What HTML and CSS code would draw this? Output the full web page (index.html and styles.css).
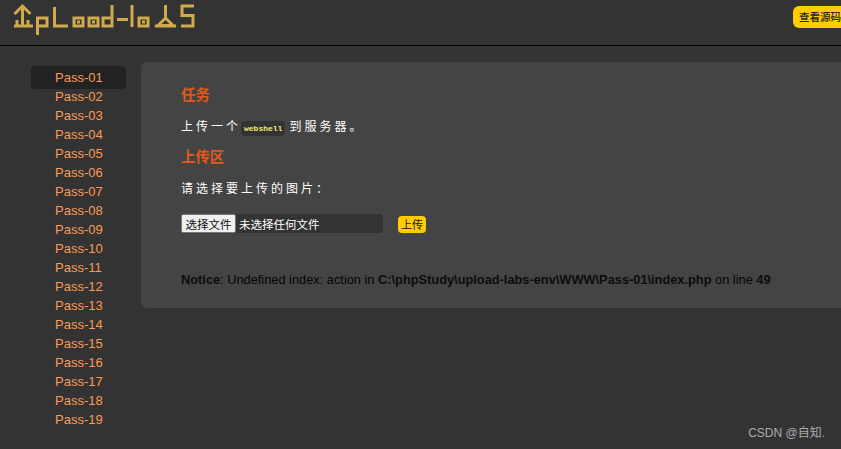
FILE: index.html
```html
<!DOCTYPE html>
<html lang="zh-CN">
<head>
<meta charset="utf-8">
<title>Upload-labs</title>
<link rel="stylesheet" href="styles.css">
</head>
<body>
<header class="header">
  <svg class="logo" width="200" height="38" viewBox="0 0 200 38" role="img" aria-label="Upload-labs">
    <g class="logo-lines">
      <path d="M14.500 14 L22.500 6 L30.500 14 M22.500 6 V25 M14 26 H33 M17 26 V20 M28 26 V20"/>
      <path d="M37.500 35 V18 H47 V26 H37.500"/>
      <path d="M54.500 7 V26 H68"/>
      <path d="M74 18 H83 V26 H74 Z"/>
      <path d="M89 18 H98 V26 H89 Z"/>
      <path d="M112 5 V26 H103 V18 H112"/>
      <path d="M117 19.500 H128"/>
      <path d="M132 5 V27"/>
      <path d="M139 18 H148 V26 H139 Z"/>
      <path d="M165.500 5 V17 M155 26 H176"/>
      <path d="M158 25.500 L165.500 18 L173 25.500 Z"/>
      <path d="M194 6 H182 V15.500 H193 V26 H181"/>
    </g>
    <g class="logo-dots">
      <rect x="77" y="20.500" width="3" height="3"/>
      <rect x="92" y="20.500" width="3" height="3"/>
      <rect x="142" y="20.500" width="3" height="3"/>
    </g>
  </svg>
  <a class="source-btn">查看源码</a>
</header>
<div class="layout">
  <nav class="side">
    <a class="side-link active">Pass-01</a>
    <a class="side-link">Pass-02</a>
    <a class="side-link">Pass-03</a>
    <a class="side-link">Pass-04</a>
    <a class="side-link">Pass-05</a>
    <a class="side-link">Pass-06</a>
    <a class="side-link">Pass-07</a>
    <a class="side-link">Pass-08</a>
    <a class="side-link">Pass-09</a>
    <a class="side-link">Pass-10</a>
    <a class="side-link">Pass-11</a>
    <a class="side-link">Pass-12</a>
    <a class="side-link">Pass-13</a>
    <a class="side-link">Pass-14</a>
    <a class="side-link">Pass-15</a>
    <a class="side-link">Pass-16</a>
    <a class="side-link">Pass-17</a>
    <a class="side-link">Pass-18</a>
    <a class="side-link">Pass-19</a>
  </nav>
  <main class="panel">
    <h3 class="title">任务</h3>
    <p class="spaced task">上传一个<code class="code">webshell</code>到服务器。</p>
    <h3 class="title second">上传区</h3>
    <p class="spaced prompt">请选择要上传的图片：</p>
    <div class="upload-row">
      <div class="file-box">
        <button class="file-btn" type="button">选择文件</button>
        <span class="file-name">未选择任何文件</span>
      </div>
      <button class="upload-btn" type="button">上传</button>
    </div>
    <p class="notice"><b>Notice</b>: Undefined index: action in <b>C:\phpStudy\upload-labs-env\WWW\Pass-01\index.php</b> on line <b>49</b></p>
  </main>
</div>
<div class="watermark">CSDN @自知.</div>
</body>
</html>
```
FILE: styles.css
```css
* { box-sizing: border-box; }
html, body { height: 100%; }
body {
  margin: 0;
  background: #333;
  overflow: hidden;
  position: relative;
  font-family: "Liberation Sans", "Noto Sans CJK SC", sans-serif;
}
.header {
  display: flex;
  height: 46px;
  padding: 6px 0 0;
  border-bottom: 1px solid #000;
}
.logo {
  display: block;
  flex: none;
  margin-top: -6px;
}
.logo-lines path {
  fill: none;
  stroke: #d0aa4c;
  stroke-width: 3;
}
.logo-dots rect { fill: #d0aa4c; }
.source-btn {
  flex: none;
  margin-left: auto;
  width: 48px;
  height: 22px;
  padding-left: 6px;
  overflow: hidden;
  background: #fc0;
  border-radius: 6px 0 0 6px;
  color: #222;
  font-size: 10.500px;
  font-weight: 500;
  line-height: 23px;
  white-space: nowrap;
}
.layout {
  display: flex;
  align-items: flex-start;
  padding-top: 16px;
}
.side {
  flex: none;
  display: flex;
  flex-direction: column;
  width: 95px;
  margin: 6px 15px 0 31px;
}
.side-link {
  height: 19px;
  padding-left: 24px;
  color: #fa9a55;
  font-size: 13px;
  line-height: 19px;
}
.side-link.active {
  height: 23px;
  margin: -2px 0;
  padding-top: 2px;
  background: #222;
  border-radius: 4px;
}
.panel {
  flex: 1;
  min-width: 0;
  height: 246px;
  padding: 25px 40px 0;
  background: #444;
  border-radius: 6px 0 0 6px;
}
.title {
  margin: 0;
  color: #e2591a;
  font-size: 14.400px;
  font-weight: 700;
  line-height: 17px;
}
.second { margin-top: 13px; }
.spaced {
  margin: 0;
  color: #fff;
  font-size: 12px;
  font-weight: 400;
  letter-spacing: 3px;
  line-height: 18px;
}
.task { margin-top: 14px; }
.prompt { margin-top: 14px; }
.code {
  display: inline-block;
  margin: 0 4px 0 0;
  padding: 0 3px;
  background: #333;
  border-radius: 4px;
  color: #f0f070;
  font-family: "Liberation Mono", monospace;
  font-size: 8px;
  font-weight: 700;
  letter-spacing: 0;
  line-height: 15px;
}
.upload-row {
  display: flex;
  align-items: center;
  margin-top: 16px;
}
.file-box {
  display: flex;
  align-items: center;
  width: 202px;
  height: 19px;
  background: #333;
  border-radius: 4px;
}
.file-btn {
  width: 55px;
  height: 19px;
  padding: 0;
  background: #efefef;
  border: 1px solid #767676;
  border-radius: 2px;
  color: #111;
  font-family: inherit;
  font-size: 11.500px;
}
.file-name {
  margin-left: 3px;
  color: #fff;
  font-size: 11.500px;
}
.upload-btn {
  width: 28px;
  height: 17px;
  margin: 1px 0 0 15px;
  padding: 0;
  background: #fc0;
  border: 0;
  border-radius: 4px;
  color: #111;
  font-family: inherit;
  font-size: 11px;
}
.notice {
  margin: 38px 0 0;
  color: #050505;
  font-size: 12.800px;
  line-height: 18px;
  white-space: nowrap;
}
.notice b { color: #0c0c0c; }
.watermark {
  position: absolute;
  right: 16px;
  top: 425px;
  color: #aaa;
  font-size: 12px;
  line-height: 16px;
}
```
